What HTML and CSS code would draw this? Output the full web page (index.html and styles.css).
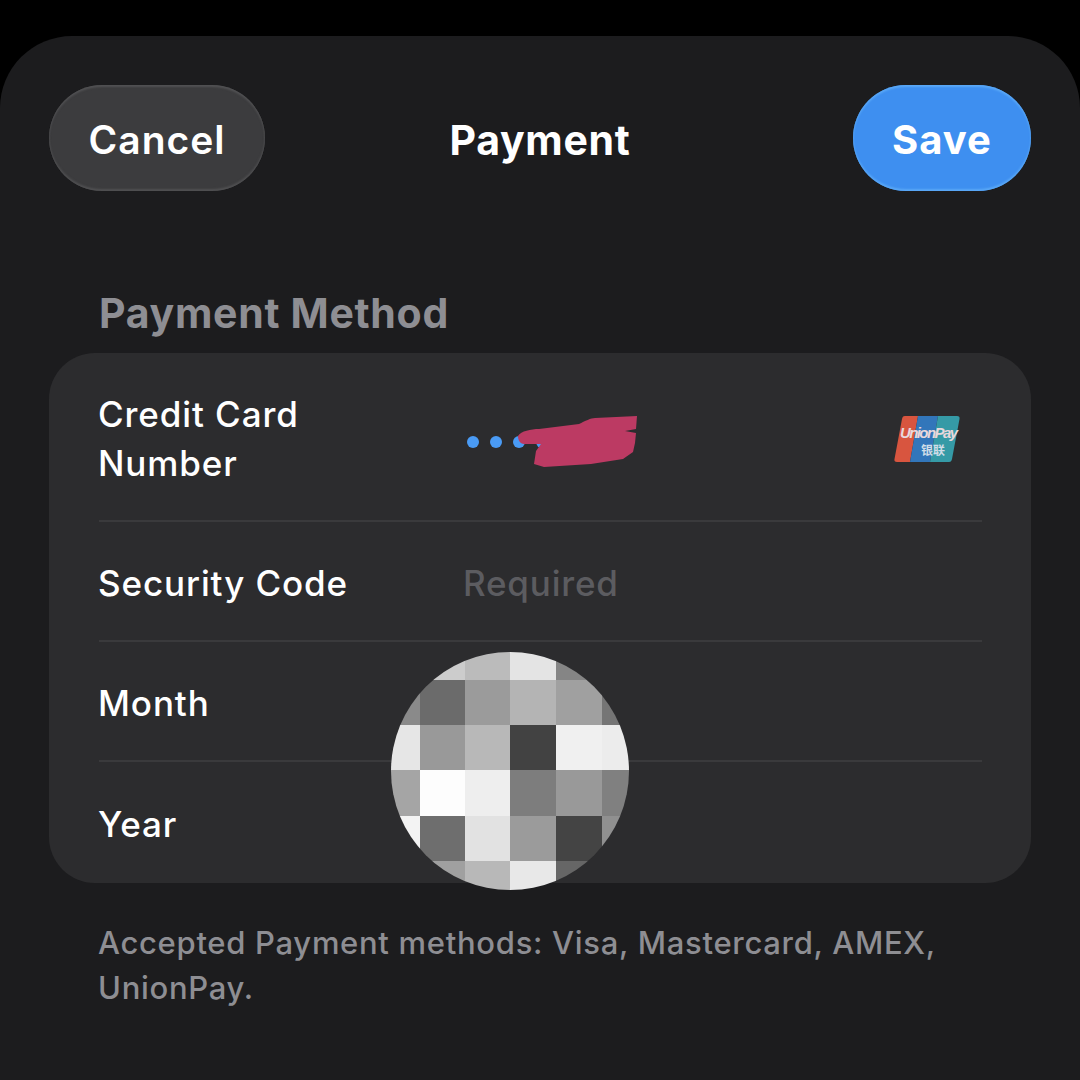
FILE: index.html
```html
<!DOCTYPE html>
<html lang="en">
<head>
<meta charset="utf-8">
<title>Payment</title>
<link rel="stylesheet" href="styles.css">
</head>
<body>
<main class="sheet">
  <header class="nav">
    <button class="pill pill-cancel">Cancel</button>
    <h1 class="nav-title">Payment</h1>
    <button class="pill pill-save">Save</button>
  </header>
  <h2 class="section-title">Payment Method</h2>
  <section class="card">
    <div class="row row-tall">
      <div class="label">Credit Card<br>Number</div>
      <div class="value dots">
        <span class="dot"></span><span class="dot"></span><span class="dot"></span><span class="dot"></span>
        <svg class="scribble" width="130" height="60" viewBox="0 0 130 60"><path fill="#bc3a63" d="M53 22 C56 17 66 15 74 15 L114 10 C120 7 126 4 130 4 L172 2 L171 15 L160 17 L171 19 L170 29 L168 38 L158 45 L126 50 L79 53 L69 50 L71 37 L76 30 L59 30 C55 30 53 26 53 22Z" transform="translate(-36 0)"/></svg>
      </div>
      <svg class="unionpay" width="68" height="50" viewBox="0 0 68 50">
        <path fill="#d8553f" d="M12 1 H25 L17 47 H4 C2 47 1 46 1.500 44 L9 4 C9.500 2 10 1 12 1Z"/>
        <path fill="#3276ba" d="M25 1 H45 L37 47 H17Z"/>
        <path fill="#359aa6" d="M45 1 H64 C66 1 67 2 66.500 4 L59 44 C58.500 46 58 47 56 47 H37Z"/>
        <text class="up-latin" x="7" y="23" textLength="58">UnionPay</text>
        <text class="up-cjk" x="28" y="40">银联</text>
      </svg>
    </div>
    <div class="row">
      <div class="label">Security Code</div>
      <div class="value placeholder">Required</div>
    </div>
    <div class="row">
      <div class="label">Month</div>
    </div>
    <div class="row row-last">
      <div class="label">Year</div>
    </div>
    <div class="mosaic" aria-hidden="true">
      <i class="c0"></i><i class="c1"></i><i class="c2"></i><i class="c3"></i><i class="c4"></i><i class="c5"></i>
      <i class="c6"></i><i class="c7"></i><i class="c8"></i><i class="c9"></i><i class="c10"></i><i class="c11"></i>
      <i class="c12"></i><i class="c13"></i><i class="c14"></i><i class="c15"></i><i class="c16"></i><i class="c17"></i>
      <i class="c18"></i><i class="c19"></i><i class="c20"></i><i class="c21"></i><i class="c22"></i><i class="c23"></i>
      <i class="c24"></i><i class="c25"></i><i class="c26"></i><i class="c27"></i><i class="c28"></i><i class="c29"></i>
      <i class="c30"></i><i class="c31"></i><i class="c32"></i><i class="c33"></i><i class="c34"></i><i class="c35"></i>
    </div>
  </section>
  <p class="footnote">Accepted Payment methods: Visa, Mastercard, AMEX, UnionPay.</p>
</main>
</body>
</html>
```
FILE: styles.css
```css
* { box-sizing: border-box; }
html, body { margin: 0; height: 100%; }
body {
  background: #000;
  font-family: Inter, "Noto Sans CJK SC", sans-serif;
  color: #fff;
  overflow: hidden;
  padding-top: 36px;
}
.sheet {
  height: 1044px;
  background: #1c1c1e;
  border-radius: 72px 72px 0 0;
  padding: 49px 49px 0;
}
.nav {
  display: grid;
  grid-template-columns: 1fr auto 1fr;
  align-items: center;
  height: 106px;
}
.nav-title {
  margin: 3px 0 0;
  font-size: 41px;
  font-weight: 700;
  line-height: 44px;
  letter-spacing: 0.7px;
}
.pill {
  height: 106px;
  border: 0;
  border-radius: 53px;
  font-family: inherit;
  font-size: 39px;
  font-weight: 600;
  color: #fff;
  padding: 3px 0 0;
}
.pill-cancel {
  width: 216px;
  justify-self: start;
  background: #3c3c3e;
  letter-spacing: 1px;
  box-shadow: inset 0 2px 2px #515153, inset 0 -2px 2px #505052;
}
.pill-save {
  width: 178px;
  justify-self: end;
  background: #3e8ff0;
  font-size: 40px;
  font-weight: 700;
  letter-spacing: 1px;
  box-shadow: inset 0 2px 2px #5aa8f6, inset 0 -2px 2px #5aa8f6;
}
.section-title {
  margin: 100px 0 0 50px;
  font-size: 41px;
  font-weight: 700;
  line-height: 44px;
  letter-spacing: 0.7px;
  color: #8e8e93;
}
.card {
  position: relative;
  margin-top: 18px;
  height: 530px;
  background: #2c2c2e;
  border-radius: 46px;
  padding: 0 49px 0 50px;
}
.row {
  display: flex;
  align-items: center;
  height: 120px;
  border-bottom: 2px solid #3a3a3c;
}
.row-tall { height: 169px; }
.row-last { height: 121px; border-bottom: 0; }
.label {
  width: 365px;
  flex: none;
  margin: 4px 0 0 -1px;
  font-size: 35px;
  font-weight: 500;
  line-height: 49px;
  letter-spacing: 0.9px;
}
.value {
  margin-top: 4px;
  font-size: 35px;
  font-weight: 500;
  letter-spacing: 0.8px;
}
.placeholder { color: #5c5c60; }
.dots {
  position: relative;
  display: flex;
  gap: 11px;
  padding-left: 4px;
  margin-top: 10px;
  flex: 1;
}
.dot {
  width: 12px;
  height: 12px;
  border-radius: 50%;
  background: #4a9bf5;
}
.scribble {
  position: absolute;
  left: 38px;
  top: -22px;
  overflow: visible;
}
.unionpay {
  flex: none;
  margin: 6px 21px 0 0;
}
.up-latin {
  font-family: "Liberation Sans", sans-serif;
  font-size: 15px;
  font-style: italic;
  font-weight: 700;
  fill: #e8d8dc;
}
.up-cjk {
  font-family: "Noto Sans CJK SC", sans-serif;
  font-size: 12px;
  font-weight: 700;
  fill: #cfdde8;
}
.mosaic {
  position: absolute;
  left: 342px;
  top: 299px;
  width: 238px;
  height: 238px;
  border-radius: 50%;
  overflow: hidden;
  display: grid;
  grid-template-columns: 29px 45px 45px 46px 46px 27px;
  grid-template-rows: 28px 45px 45px 46px 45px 29px;
}
.c0 { background: #8c8c8c; }
.c1 { background: #cccccc; }
.c2 { background: #bbbbbb; }
.c3 { background: #e4e4e4; }
.c4 { background: #858585; }
.c5 { background: #757575; }
.c6 { background: #8a8a8a; }
.c7 { background: #6b6b6b; }
.c8 { background: #9b9b9b; }
.c9 { background: #b4b4b4; }
.c10 { background: #a0a0a0; }
.c11 { background: #757575; }
.c12 { background: #e6e6e6; }
.c13 { background: #999999; }
.c14 { background: #b8b8b8; }
.c15 { background: #424242; }
.c16 { background: #f0f0f0; }
.c17 { background: #ececec; }
.c18 { background: #a5a5a5; }
.c19 { background: #fdfdfd; }
.c20 { background: #eeeeee; }
.c21 { background: #7d7d7d; }
.c22 { background: #999999; }
.c23 { background: #808080; }
.c24 { background: #f3f3f3; }
.c25 { background: #6e6e6e; }
.c26 { background: #e2e2e2; }
.c27 { background: #9b9b9b; }
.c28 { background: #444444; }
.c29 { background: #909090; }
.c30 { background: #888888; }
.c31 { background: #a0a0a0; }
.c32 { background: #b8b8b8; }
.c33 { background: #e8e8e8; }
.c34 { background: #666666; }
.c35 { background: #666666; }
.footnote {
  margin: 37px 0 0 49px;
  width: 860px;
  font-size: 31px;
  font-weight: 500;
  line-height: 45px;
  letter-spacing: 0.7px;
  color: #8e8e93;
}
```
